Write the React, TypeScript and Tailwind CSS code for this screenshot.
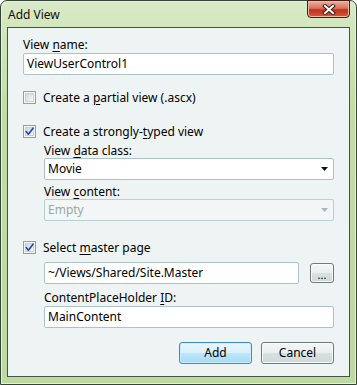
import React from 'react';

const Mn = ({ children }: { children: React.ReactNode }) => (
    <span className="underline decoration-1 underline-offset-2">{children}</span>
);

const CheckBox = ({ checked }: { checked?: boolean }) => (
    <div className="flex h-[13px] w-[13px] shrink-0 items-center justify-center border border-[#8ea3a6] bg-[#f4f7f7]">
        <div className="relative h-[9px] w-[9px] border border-[#c7d3d5] bg-[linear-gradient(135deg,#cfd9db_0%,#f7f9f9_100%)]">
            {checked && (
                <svg className="absolute -left-[1px] -top-[1px]" width="9" height="9" viewBox="0 0 9 9">
                    <path d="M1.2 4.6 L3.4 7.2 L8 1.2" fill="none" stroke="#2342b8" strokeWidth="1.6" strokeLinecap="round" strokeLinejoin="round" />
                </svg>
            )}
        </div>
    </div>
);

const TextBox = ({ value, className = '' }: { value: string; className?: string }) => (
    <div className={`flex h-[22px] items-center rounded-[2px] border border-[#abc4ca] bg-white pl-[3px] ${className}`}>{value}</div>
);

const Arrow = ({ color }: { color: string }) => (
    <svg width="7" height="4" viewBox="0 0 7 4">
        <path d="M0 0 H7 L3.5 4 Z" fill={color} />
    </svg>
);

const Combo = ({ value, disabled }: { value: string; disabled?: boolean }) => (
    <div
        className={`flex h-[22px] items-center justify-between rounded-[2px] border pl-[3px] pr-[5px] ${
            disabled ? 'border-[#b9d0d2] bg-[#f2f6f6] text-[#9aa9aa]' : 'border-[#abc4ca] bg-white text-black'
        }`}
    >
        <span>{value}</span>
        <Arrow color={disabled ? '#a4b8ba' : '#111'} />
    </div>
);

const Button = ({ children, primary, className = '' }: { children: React.ReactNode; primary?: boolean; className?: string }) => (
    <div
        className={`flex items-center justify-center rounded-[3px] border ${
            primary
                ? 'border-[#3d8bc0] bg-[linear-gradient(to_bottom,#eaf6fd_0%,#d9f0fc_50%,#bee6fd_50%,#a7d9f5_100%)] shadow-[inset_0_0_0_1px_#c5f0ff]'
                : 'border-[#6f7b7b] bg-[linear-gradient(to_bottom,#f3f6f6_0%,#e9efef_50%,#d9e2e2_50%,#cfd9d9_100%)] shadow-[inset_0_0_0_1px_#f8fbfb]'
        } ${className}`}
    >
        {children}
    </div>
);

export default function App() {
    return (
        <div className="h-[385px] w-[357px] font-['Noto_Sans',sans-serif] text-[12px] text-black">
            <div className="relative flex h-full w-full flex-col rounded-t-[7px] border border-[#33443a] bg-[linear-gradient(to_bottom,#d9ebc8_0%,#cfe5b7_10%,#c1dca4_30%,#bedaa0_100%)] shadow-[inset_0_0_0_1px_#e6f2dc]">
                {/* title bar */}
                <div className="flex h-[26px] shrink-0 items-center pl-[7px] pt-[1px] text-[12px] text-[#111]">Add View</div>

                {/* close button */}
                <div className="absolute right-[6px] top-[-1px] flex h-[18px] w-[43px] items-center justify-center rounded-b-[4px] border border-[#4a1a14] bg-[linear-gradient(to_bottom,#eab2a2_0%,#d9725c_45%,#c0301c_55%,#d65a3e_100%)] shadow-[inset_0_0_0_1px_#f0b8a8]">
                    <svg width="14" height="11" viewBox="0 0 14 11">
                        <path d="M3 2 L11 9 M11 2 L3 9" stroke="#3b1d18" strokeWidth="4" strokeLinecap="square" />
                        <path d="M3 2 L11 9 M11 2 L3 9" stroke="#ffffff" strokeWidth="2" strokeLinecap="square" />
                    </svg>
                </div>

                {/* client area */}
                <div className="mx-[6px] mb-[7px] flex flex-1 flex-col border border-[#435348] bg-[#eef4f4] px-[15px]">
                    <div className="mt-[9px] h-[15px] leading-[15px]">
                        View <Mn>n</Mn>ame:
                    </div>
                    <TextBox value="ViewUserControl1" className="mt-[1px]" />

                    <div className="mt-[16px] flex h-[13px] items-center gap-[7px]">
                        <CheckBox />
                        <span className="leading-[15px]">
                            Create a <Mn>p</Mn>artial view (.ascx)
                        </span>
                    </div>

                    <div className="mt-[21px] flex h-[13px] items-center gap-[7px]">
                        <CheckBox checked />
                        <span className="leading-[15px]">
                            Create a strongly-<Mn>t</Mn>yped view
                        </span>
                    </div>

                    <div className="ml-[21px] flex flex-col">
                        <div className="mt-[5px] h-[15px] leading-[15px]">
                            View <Mn>d</Mn>ata class:
                        </div>
                        <Combo value="Movie" />
                        <div className="mt-[4px] h-[15px] leading-[15px]">
                            View <Mn>c</Mn>ontent:
                        </div>
                        <Combo value="Empty" disabled />
                    </div>

                    <div className="mt-[20px] flex h-[13px] items-center gap-[7px]">
                        <CheckBox checked />
                        <span className="leading-[15px]">
                            Select <Mn>m</Mn>aster page
                        </span>
                    </div>

                    <div className="ml-[21px] flex flex-col">
                        <div className="mt-[8px] flex items-center gap-[11px]">
                            <TextBox value="~/Views/Shared/Site.Master" className="flex-1" />
                            <Button className="h-[20px] w-[24px] items-end pb-[2px] text-[11px] leading-[10px]">...</Button>
                        </div>
                        <div className="mt-[6px] h-[15px] leading-[15px]">
                            ContentPlaceHolder <Mn>I</Mn>D:
                        </div>
                        <TextBox value="MainContent" className="mt-[1px]" />
                    </div>

                    <div className="mt-[14px] flex justify-end gap-[9px]">
                        <Button primary className="h-[22px] w-[73px]">
                            Add
                        </Button>
                        <Button className="h-[22px] w-[73px]">Cancel</Button>
                    </div>
                </div>
            </div>
        </div>
    );
}
